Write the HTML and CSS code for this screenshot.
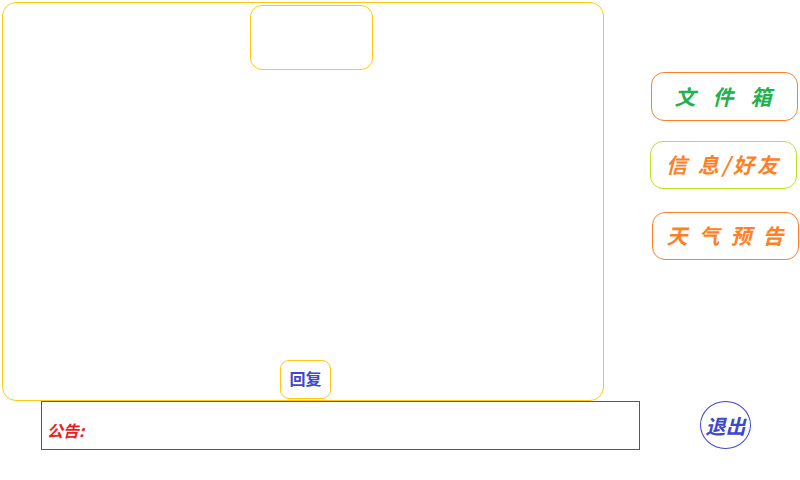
FILE: index.html
```html
<!DOCTYPE html>
<html lang="zh-CN">
<head>
<meta charset="utf-8">
<title>主界面</title>
<link rel="stylesheet" href="styles.css">
</head>
<body>
<div class="page">
  <div class="left">
    <div class="panel">
      <div class="top-box"></div>
      <div class="reply">回复</div>
    </div>
    <div class="notice"><span class="notice-label">公告:</span></div>
  </div>
  <div class="right">
    <div class="btn btn-files">文件箱</div>
    <div class="btn btn-msg">信&nbsp;息/好友</div>
    <div class="btn btn-weather">天气预告</div>
    <div class="exit">退出</div>
  </div>
</div>
</body>
</html>
```
FILE: styles.css
```css
html, body {
  margin: 0;
  padding: 0;
  background: #ffffff;
}
body {
  width: 800px;
  height: 480px;
  overflow: hidden;
  font-family: "Noto Sans CJK SC", "Noto Sans", sans-serif;
}
.page {
  display: flex;
  padding: 2px 0 0 2px;
}
.left {
  width: 638px;
  display: flex;
  flex-direction: column;
}
.panel {
  box-sizing: border-box;
  width: 602px;
  height: 399px;
  border: 1px solid #ffc90e;
  border-radius: 14px;
  display: flex;
  flex-direction: column;
  justify-content: space-between;
  align-items: flex-start;
  padding: 2px 0 1px 0;
}
.top-box {
  box-sizing: border-box;
  width: 123px;
  height: 65px;
  margin-left: 247px;
  border: 1px solid #ffc90e;
  border-radius: 12px;
}
.reply {
  box-sizing: border-box;
  width: 51px;
  height: 39px;
  margin-left: 277px;
  border: 1px solid #ffc90e;
  border-radius: 9px;
  color: #3f48cc;
  font-weight: bold;
  font-size: 16px;
  display: flex;
  align-items: center;
  justify-content: center;
  padding-bottom: 3px;
}
.notice {
  box-sizing: border-box;
  width: 599px;
  height: 49px;
  margin-left: 39px;
  border: 1px solid #d42030;
  display: flex;
  align-items: center;
  padding: 8px 0 0 5px;
}
.notice-label {
  color: #ed1c24;
  font-weight: bold;
  font-style: italic;
  font-size: 16px;
}
.right {
  display: flex;
  flex-direction: column;
  padding-left: 11px;
}
.btn {
  box-sizing: border-box;
  width: 147px;
  height: 48px;
  border: 1px solid #ff7f27;
  border-radius: 13px;
  display: flex;
  align-items: center;
  justify-content: center;
  font-weight: bold;
  font-style: italic;
  font-size: 21px;
  white-space: nowrap;
  padding-bottom: 2px;
}
.btn-files {
  margin-top: 70px;
  height: 49px;
  color: #22b14c;
  letter-spacing: 17px;
  padding-left: 14px;
}
.btn-msg {
  margin-top: 20px;
  margin-left: -1px;
  border-color: #b5e61d;
  color: #ff7f27;
  letter-spacing: 3px;
  padding-left: 0;
}
.btn-weather {
  margin-top: 23px;
  margin-left: 1px;
  color: #ff7f27;
  letter-spacing: 11px;
  padding-left: 10px;
}
.exit {
  box-sizing: border-box;
  width: 51px;
  height: 48px;
  margin-top: 141px;
  margin-left: 49px;
  border: 1px solid #3f48cc;
  border-radius: 50%;
  color: #3f48cc;
  font-weight: bold;
  font-style: italic;
  font-size: 20px;
  display: flex;
  align-items: center;
  justify-content: center;
}
```
